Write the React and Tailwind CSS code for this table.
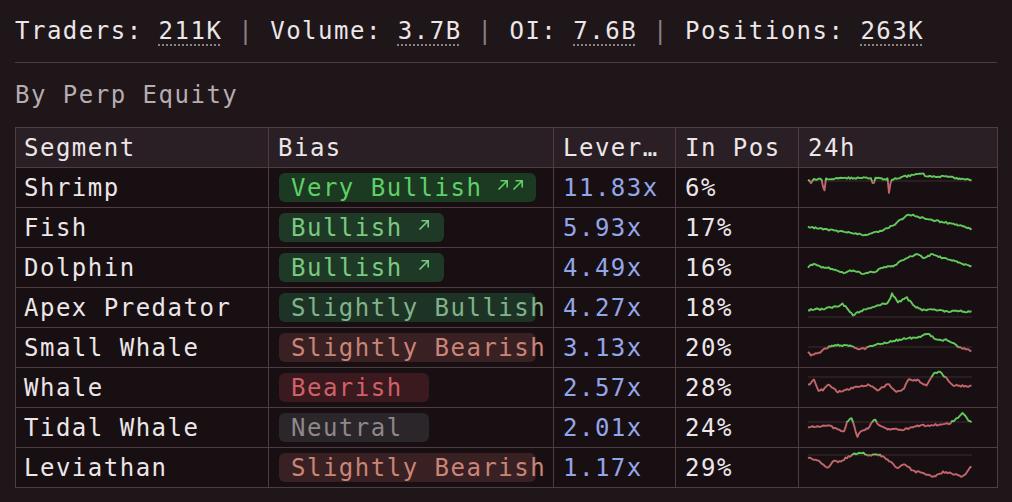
import React from 'react';

// sparkline keypoints are [x, y] in px inside a 166x39 box; base = reference line
const rows = [
  {
    name: 'Shrimp', bias: 'Very Bullish', tone: 'vbull', arrows: 2, lev: '11.83x', pos: '6%', base: 13,
    keys: [[0, 12], [3, 15], [6, 11], [14, 11], [16, 27], [18, 11], [40, 10], [60, 10], [64, 10], [65, 21], [67, 10], [80, 11], [81, 25], [83, 11], [100, 8], [114, 5], [118, 8], [140, 9], [164, 12]],
  },
  {
    name: 'Fish', bias: 'Bullish', tone: 'bull', arrows: 1, lev: '5.93x', pos: '17%', base: 40,
    keys: [[0, 19], [15, 21], [30, 23], [45, 25], [57, 27], [70, 24], [80, 20], [90, 14], [100, 6], [108, 8], [120, 11], [135, 14], [150, 17], [164, 21]],
  },
  {
    name: 'Dolphin', bias: 'Bullish', tone: 'bull', arrows: 1, lev: '4.49x', pos: '16%', base: 40,
    keys: [[0, 19], [5, 16], [12, 19], [25, 21], [35, 25], [45, 22], [55, 26], [65, 24], [75, 20], [85, 18], [95, 12], [109, 6], [116, 10], [124, 6], [135, 10], [150, 14], [164, 19]],
  },
  {
    name: 'Apex Predator', bias: 'Slightly Bullish', tone: 'sbull', arrows: 0, lev: '4.27x', pos: '18%', base: 29,
    keys: [[0, 22], [15, 21], [30, 18], [35, 16], [45, 27], [55, 22], [70, 17], [80, 15], [84, 6], [90, 14], [99, 10], [106, 18], [115, 22], [130, 22], [140, 24], [150, 23], [164, 24]],
  },
  {
    name: 'Small Whale', bias: 'Slightly Bearish', tone: 'sbear', arrows: 0, lev: '3.13x', pos: '20%', base: 19,
    keys: [[0, 24], [3, 27], [12, 24], [22, 18], [30, 17], [45, 18], [50, 21], [57, 21], [62, 18], [75, 15], [90, 12], [100, 10], [110, 10], [120, 5], [128, 12], [140, 12], [150, 19], [158, 21], [164, 24]],
  },
  {
    name: 'Whale', bias: 'Bearish', tone: 'bear', arrows: 0, lev: '2.57x', pos: '28%', base: 9,
    keys: [[0, 17], [6, 12], [10, 22], [15, 22], [20, 16], [30, 24], [45, 20], [60, 17], [70, 22], [80, 16], [88, 24], [95, 22], [100, 12], [110, 12], [118, 18], [125, 6], [132, 4], [137, 9], [145, 17], [152, 18], [164, 18]],
  },
  {
    name: 'Tidal Whale', bias: 'Neutral', tone: 'neutral', arrows: 0, lev: '2.01x', pos: '24%', base: 14,
    keys: [[0, 19], [10, 19], [20, 17], [30, 22], [36, 23], [40, 12], [44, 10], [49, 29], [52, 24], [60, 20], [67, 11], [70, 17], [80, 21], [95, 22], [110, 18], [125, 17], [140, 16], [150, 10], [155, 5], [160, 12], [164, 15]],
  },
  {
    name: 'Leviathan', bias: 'Slightly Bearish', tone: 'sbear', arrows: 0, lev: '1.17x', pos: '29%', base: 7,
    keys: [[0, 10], [10, 12], [20, 20], [25, 13], [30, 14], [35, 12], [40, 9], [45, 6], [55, 5], [60, 7], [72, 7], [80, 12], [89, 20], [97, 16], [105, 23], [115, 25], [125, 29], [135, 24], [145, 26], [155, 29], [160, 22], [164, 18]],
  },
];

const toneClass = {
  vbull: 'bg-[#1c3a22] text-[#5fd067]',
  bull: 'bg-[#1e3926] text-[#79c981]',
  sbull: 'bg-[#1d3326] text-[#80b38a]',
  sbear: 'bg-[#392023] text-[#c98577]',
  bear: 'bg-[#3a1a1e] text-[#d0606a]',
  neutral: 'bg-[#2a2629] text-[#8d888a]',
};

const Arrow = () => (
  <svg width="12" height="12" viewBox="0 0 12 12" className="mb-[6px]">
    <path d="M1.5 10.5 L10 2 M3.5 1.8 H10.2 V8.5" fill="none" stroke="currentColor" strokeWidth="1.6" />
  </svg>
);

const buildPath = (keys, seed) => {
  let s = seed * 7919 + 13;
  const rand = () => {
    s = (s * 9301 + 49297) % 233280;
    return s / 233280;
  };
  let d = '';
  let k = 0;
  for (let x = 0; x <= 164; x += 1.5) {
    while (k < keys.length - 2 && keys[k + 1][0] < x) k++;
    const [x0, y0] = keys[k];
    const [x1, y1] = keys[k + 1];
    const t = x1 === x0 ? 0 : Math.min(1, Math.max(0, (x - x0) / (x1 - x0)));
    const y = y0 + (y1 - y0) * t + (rand() - 0.5) * 1.8;
    d += `${d ? 'L' : 'M'}${(x + 1).toFixed(1)} ${y.toFixed(1)}`;
  }
  return d;
};

const Sparkline = ({ keys, base, id }) => {
  const d = buildPath(keys, id + 1);
  return (
    <svg width="168" height="39" className="block">
      <defs>
        <clipPath id={`up-${id}`}>
          <rect x="0" y="0" width="168" height={base} />
        </clipPath>
        <clipPath id={`dn-${id}`}>
          <rect x="0" y={base} width="168" height={39} />
        </clipPath>
      </defs>
      {base < 39 && <line x1="1" x2="165" y1={base} y2={base} stroke="#3b2c31" strokeWidth="1" />}
      <path d={d} fill="none" stroke="#62c95a" strokeWidth="1.9" strokeLinejoin="round" clipPath={`url(#up-${id})`} />
      <path d={d} fill="none" stroke="#c2666c" strokeWidth="1.9" strokeLinejoin="round" clipPath={`url(#dn-${id})`} />
    </svg>
  );
};

const Stat = ({ label, value }) => (
  <span>
    {label}{' '}
    <span className="underline decoration-dotted decoration-[#8c8286] decoration-[1.5px] underline-offset-[5px]">{value}</span>
  </span>
);

const Sep = () => <span className="text-[#8a7e82]"> | </span>;

const cell = 'h-[40px] border-r border-b border-[#523c43] flex items-center';

export default function App() {
  return (
    <div className="w-[1012px] h-[502px] bg-[#1e1619] px-[15px] font-['DejaVu_Sans_Mono',monospace] text-[24px] tracking-[1.5px] text-[#ece6e8] overflow-hidden">
      <div className="w-[982px]">
        <div className="h-[62px] flex items-center whitespace-pre">
          <Stat label="Traders:" value="211K" />
          <Sep />
          <Stat label="Volume:" value="3.7B" />
          <Sep />
          <Stat label="OI:" value="7.6B" />
          <Sep />
          <Stat label="Positions:" value="263K" />
        </div>
        <div className="border-t border-[#4e3a40]" />
        <div className="h-[64px] flex items-center text-[#b7adb0]">By Perp Equity</div>

        <div className="grid grid-cols-[253px_285px_122px_123px_199px] border-l border-t border-[#523c43] w-[983px]">
          <div className={`${cell} bg-[#2a1f24] pl-[8px]`}>Segment</div>
          <div className={`${cell} bg-[#2a1f24] pl-[9px]`}>Bias</div>
          <div className={`${cell} bg-[#2a1f24] pl-[9px] whitespace-nowrap`}>Lever…</div>
          <div className={`${cell} bg-[#2a1f24] pl-[9px]`}>In Pos</div>
          <div className={`${cell} bg-[#2a1f24] pl-[9px]`}>24h</div>

          {rows.map((r, i) => (
            <React.Fragment key={r.name}>
              <div className={`${cell} bg-[#180f13] pl-[8px] whitespace-nowrap`}>{r.name}</div>
              <div className={`${cell} bg-[#180f13] pl-[10px] overflow-visible`}>
                <span
                  className={`inline-flex items-center h-[29px] min-w-[150px] max-w-[257px] rounded-[6px] pl-[12px] pr-[14px] whitespace-nowrap ${toneClass[r.tone]}`}
                >
                  {r.bias}
                  {r.arrows > 0 && (
                    <span className="flex items-center gap-[3px] ml-[15px]">
                      <Arrow />
                      {r.arrows > 1 && <Arrow />}
                    </span>
                  )}
                </span>
              </div>
              <div className={`${cell} bg-[#180f13] pl-[9px] text-[#93a6e8]`}>{r.lev}</div>
              <div className={`${cell} bg-[#180f13] pl-[9px]`}>{r.pos}</div>
              <div className={`${cell} bg-[#180f13] pl-[8px]`}>
                <Sparkline keys={r.keys} base={r.base} id={i} />
              </div>
            </React.Fragment>
          ))}
        </div>
      </div>
    </div>
  );
}
